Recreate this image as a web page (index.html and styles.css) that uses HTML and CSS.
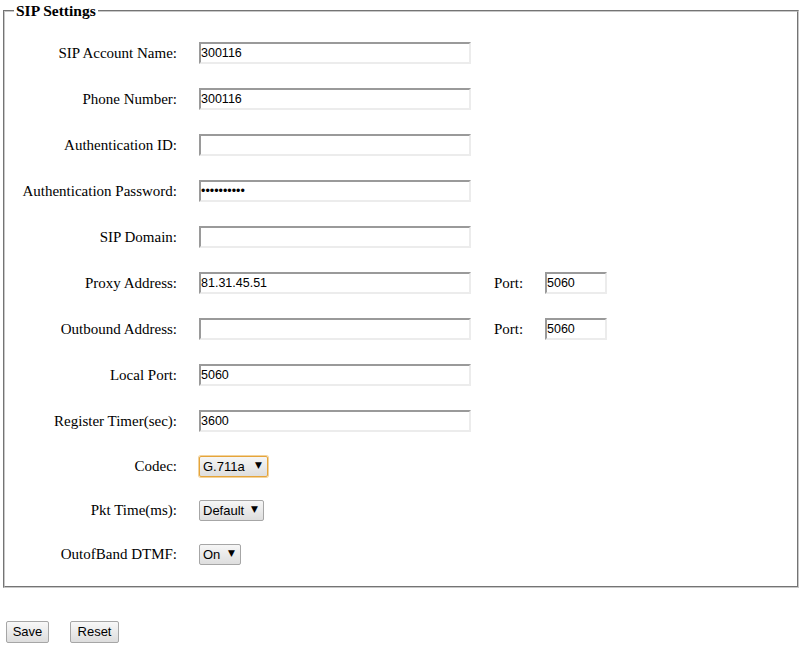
FILE: index.html
```html
<!DOCTYPE html>
<html lang="en">
<head>
  <meta charset="UTF-8">
  <title>SIP Settings</title>
  <link rel="stylesheet" href="styles.css">
</head>

<body>

  <form class="sip-form">
    <fieldset class="settings">
      <legend>SIP Settings</legend>

      <div class="rows">
        <div class="row">
          <label class="label">SIP Account Name:</label>
          <input class="text" type="text" value="300116">
        </div>
        <div class="row">
          <label class="label">Phone Number:</label>
          <input class="text" type="text" value="300116">
        </div>
        <div class="row">
          <label class="label">Authentication ID:</label>
          <input class="text" type="text" value="">
        </div>
        <div class="row">
          <label class="label">Authentication Password:</label>
          <input class="text" type="password" value="abcdefghij">
        </div>
        <div class="row">
          <label class="label">SIP Domain:</label>
          <input class="text" type="text" value="">
        </div>
        <div class="row">
          <label class="label">Proxy Address:</label>
          <input class="text" type="text" value="81.31.45.51">
          <label class="port-label">Port:</label>
          <input class="text port" type="text" value="5060">
        </div>
        <div class="row">
          <label class="label">Outbound Address:</label>
          <input class="text" type="text" value="">
          <label class="port-label">Port:</label>
          <input class="text port" type="text" value="5060">
        </div>
        <div class="row">
          <label class="label">Local Port:</label>
          <input class="text" type="text" value="5060">
        </div>
        <div class="row">
          <label class="label">Register Timer(sec):</label>
          <input class="text" type="text" value="3600">
        </div>
        <div class="row row-select">
          <label class="label">Codec:</label>
          <span class="select-wrap">
            <select class="select focused codec">
              <option>G.711a</option>
              <option>G.711u</option>
              <option>G.729</option>
            </select>
          </span>
        </div>
        <div class="row row-select">
          <label class="label">Pkt Time(ms):</label>
          <span class="select-wrap">
            <select class="select pkt">
              <option>Default</option>
              <option>10</option>
              <option>20</option>
            </select>
          </span>
        </div>
        <div class="row row-select">
          <label class="label">OutofBand DTMF:</label>
          <span class="select-wrap">
            <select class="select dtmf">
              <option>On</option>
              <option>Off</option>
            </select>
          </span>
        </div>
      </div>
    </fieldset>

    <div class="actions">
      <button type="button" class="btn save">Save</button>
      <button type="reset" class="btn reset">Reset</button>
    </div>
  </form>

</body>
</html>
```

FILE: styles.css
```css
body {
  margin: 0;
  font-family: 'Liberation Serif', 'Times New Roman', serif;
  font-size: 15px;
  color: #000;
  background-color: #fff;
}

.sip-form {
  margin: 0;
}

.settings {
  margin: 2px 3px 0 3px;
  padding: 0 0 10px 0;
  border: 2px groove #c8c8c8;
  min-width: 0;
}

.settings legend {
  font-weight: bold;
  font-size: 15.5px;
  padding: 0 2px;
  margin-left: 9px;
}

.rows {
  padding-top: 10px;
}

.row {
  display: flex;
  align-items: center;
  height: 46px;
}

.row-select {
  height: 44px;
}

.label {
  width: 172px;
  text-align: right;
  margin-right: 22px;
}

.text {
  box-sizing: border-box;
  width: 272px;
  height: 22px;
  margin: 0;
  padding: 1px 0;
  font-family: 'Liberation Sans', Arial, sans-serif;
  font-size: 12.5px;
  color: #000;
  background: #fff;
  border-style: solid;
  border-width: 2px;
  border-color: #9a9a9a #ececec #ececec #9a9a9a;
  outline: none;
}

.port {
  width: 62px;
}

.port-label {
  margin-left: 23px;
  width: 51px;
}

.select-wrap {
  position: relative;
  display: inline-block;
}

.select-wrap::after {
  content: "\25BC";
  position: absolute;
  right: 6px;
  top: 4px;
  font-family: 'DejaVu Sans', sans-serif;
  font-size: 9px;
  color: #000;
  pointer-events: none;
}

.select {
  -webkit-appearance: none;
  appearance: none;
  box-sizing: border-box;
  height: 21px;
  margin: 0;
  padding: 0 10px 0 3px;
  font-family: 'Liberation Sans', Arial, sans-serif;
  font-size: 13px;
  color: #000;
  border: 1px solid #a6a6a6;
  border-radius: 2px;
  background: linear-gradient(#f6f6f6, #dedede);
  outline: none;
}

.select.focused {
  border-color: #e5a43a;
  box-shadow: 0 0 0 1px #f3d39c;
}

.codec {
  width: 69px;
}

.pkt {
  width: 65px;
}

.dtmf {
  width: 42px;
}

.actions {
  display: flex;
  gap: 21px;
  padding: 33px 0 0 6px;
}

.btn {
  box-sizing: border-box;
  height: 22px;
  padding: 0 0 1px;
  font-family: 'Liberation Sans', Arial, sans-serif;
  font-size: 13px;
  color: #000;
  border: 1px solid #a6a6a6;
  border-radius: 2px;
  background: linear-gradient(#f8f8f8, #dddddd);
  cursor: pointer;
}

.save {
  width: 43px;
}

.reset {
  width: 49px;
}
```
